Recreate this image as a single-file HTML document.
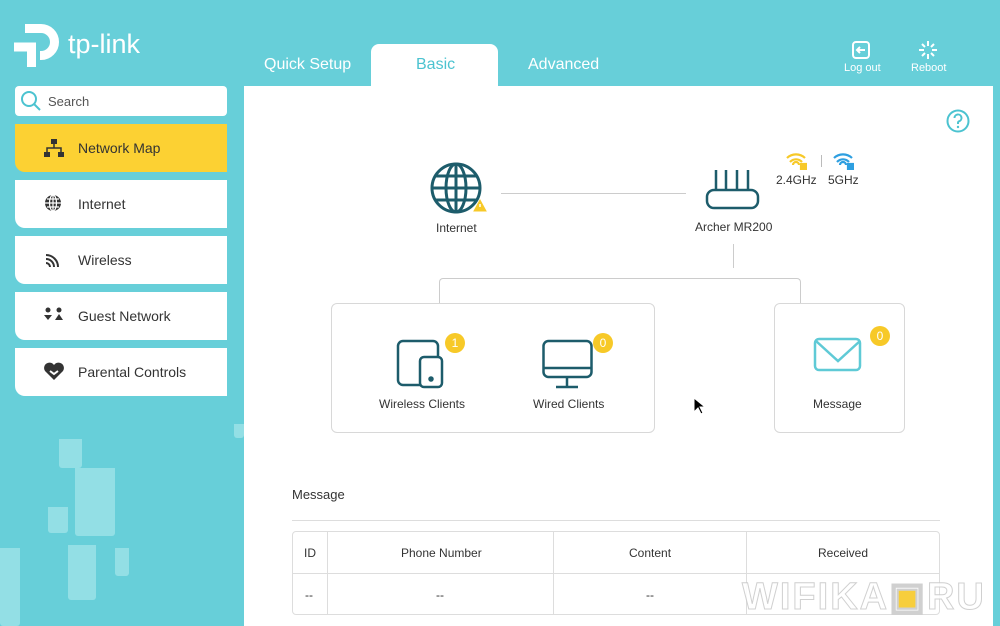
<!DOCTYPE html>
<html><head><meta charset="utf-8"><style>
*{margin:0;padding:0;box-sizing:border-box}
body{width:1000px;height:626px;overflow:hidden;background:#67cfd9;font-family:"Liberation Sans",sans-serif;position:relative;color:#333}
.abs{position:absolute}
.nav{position:absolute;left:15px;width:212px;height:48px;background:#fff;border-radius:0 0 0 10px;font-size:14px;color:#333}
.nav span{position:absolute;left:63px;top:16px}
.nav svg{position:absolute;left:28px;top:14px}
.tab{position:absolute;top:56px;font-size:16px;color:#fff}
.t{position:absolute;font-size:12px;color:#333;white-space:nowrap}
.badge{position:absolute;width:20px;height:20px;border-radius:50%;background:#f7c928;color:#fff;font-size:12px;text-align:center;line-height:20px}
.box{position:absolute;border:1px solid #d8d8d8;border-radius:6px;background:#fff}
.sq{position:absolute;background:#93dfe5;border-radius:0 0 3px 3px}
</style></head><body>
<div class="sq" style="left:59px;top:439px;width:23px;height:29px"></div>
<div class="sq" style="left:75px;top:468px;width:40px;height:68px"></div>
<div class="sq" style="left:48px;top:507px;width:20px;height:26px"></div>
<div class="sq" style="left:68px;top:545px;width:28px;height:55px"></div>
<div class="sq" style="left:0;top:548px;width:20px;height:78px"></div>
<div class="sq" style="left:115px;top:548px;width:14px;height:28px"></div>
<div class="sq" style="left:234px;top:424px;width:10px;height:14px"></div>
<svg class="abs" style="left:13px;top:18px" width="50" height="50" viewBox="0 0 50 50" fill="none" stroke="#fff" stroke-width="9"><path d="M12 10.5H28a13.5 13.5 0 0 1 0 27H27"/><path d="M1 29H23M18.5 27V49"/></svg>
<div class="abs" style="left:68px;top:29px;font-size:27px;color:#fff">tp-link</div>
<div class="tab" style="left:264px">Quick Setup</div>
<div class="abs" style="left:371px;top:44px;width:127px;height:46px;background:#fff;border-radius:8px 8px 0 0"></div>
<div class="tab" style="left:416px;color:#4cc3d0">Basic</div>
<div class="tab" style="left:528px">Advanced</div>
<svg class="abs" style="left:851px;top:40px" width="20" height="20" viewBox="0 0 20 20"><rect x="2" y="2" width="16" height="16" rx="3" fill="none" stroke="#fff" stroke-width="2"/><path d="M6 10h8M9 7l-3 3 3 3" stroke="#fff" stroke-width="2" fill="none"/></svg>
<div class="abs" style="left:844px;top:62px;font-size:11px;color:#fff">Log out</div>
<svg class="abs" style="left:917px;top:39px" width="22" height="22" viewBox="0 0 22 22" stroke="#fff" stroke-width="2"><path d="M11 2v5M11 15v5M2 11h5M15 11h5M5 5l3 3M14 14l3 3M17 5l-3 3M8 14l-3 3"/></svg>
<div class="abs" style="left:911px;top:62px;font-size:11px;color:#fff">Reboot</div>
<div class="abs" style="left:15px;top:86px;width:212px;height:30px;background:#fff;border-radius:4px"></div>
<svg class="abs" style="left:20px;top:90px" width="22" height="22" viewBox="0 0 22 22"><circle cx="9" cy="9" r="7" fill="none" stroke="#4cc3d0" stroke-width="2"/><path d="M14 14l6 6" stroke="#4cc3d0" stroke-width="2"/></svg>
<div class="abs" style="left:48px;top:94px;font-size:13px;color:#555">Search</div>
<div class="nav" style="top:124px;background:#fcd133"><svg width="22" height="20" viewBox="0 0 22 20" fill="#333"><rect x="8" y="1" width="6" height="5"/><rect x="1" y="14" width="6" height="5"/><rect x="15" y="14" width="6" height="5"/><path d="M11 6v4M4 14v-4h14v4" stroke="#333" stroke-width="1.5" fill="none"/></svg><span>Network Map</span></div>
<div class="nav" style="top:180px"><svg width="22" height="22" viewBox="0 0 22 22"><circle cx="10" cy="9" r="8" fill="#333"/><path d="M2 9h16M10 1v16M4 5h12M4 13h12" stroke="#fff" stroke-width="1.2"/><ellipse cx="10" cy="9" rx="3.5" ry="8" fill="none" stroke="#fff" stroke-width="1.2"/></svg><span>Internet</span></div>
<div class="nav" style="top:236px"><svg width="22" height="22" viewBox="0 0 22 22" fill="none" stroke="#333" stroke-width="2"><path d="M3 5a12 12 0 0 1 12 12M3 9a8 8 0 0 1 8 8M3 13a4 4 0 0 1 4 4"/></svg><span>Wireless</span></div>
<div class="nav" style="top:292px"><svg width="24" height="20" viewBox="0 0 24 20" fill="#333"><circle cx="5" cy="4" r="2.5"/><circle cx="16" cy="4" r="2.5"/><path d="M1 9h8l-4 5zM12 14l4-6 4 6z"/></svg><span>Guest Network</span></div>
<div class="nav" style="top:348px"><svg width="24" height="20" viewBox="0 0 24 20"><path d="M11 18L2 9a5 5 0 0 1 9-6a5 5 0 0 1 9 6z" fill="#333"/><path d="M7 9l4 3 4-3" stroke="#fff" stroke-width="2" fill="none"/></svg><span>Parental Controls</span></div>
<div class="abs" style="left:244px;top:86px;width:749px;height:540px;background:#fff"></div>
<svg class="abs" style="left:946px;top:109px" width="24" height="24" viewBox="0 0 24 24"><circle cx="12" cy="12" r="10.5" fill="none" stroke="#4cc3d0" stroke-width="2"/><path d="M8.5 9a3.5 3.5 0 1 1 4.5 3.3c-.8.3-1 .9-1 1.7v1" fill="none" stroke="#4cc3d0" stroke-width="2"/><circle cx="12" cy="18" r="1.2" fill="#4cc3d0"/></svg>
<svg class="abs" style="left:430px;top:162px" width="60" height="56" viewBox="0 0 60 56" fill="none" stroke="#1d5c6b" stroke-width="3"><circle cx="26" cy="26" r="24"/><ellipse cx="26" cy="26" rx="10" ry="24"/><path d="M26 2v48M2 26h48M6 14h40M6 38h40"/><path d="M50 38l-6 11h12z" fill="#f7c928" stroke="#f7c928" stroke-width="1"/><path d="M50 42v3" stroke="#fff" stroke-width="1.5"/></svg>
<div class="t" style="left:436px;top:221px">Internet</div>
<div class="abs" style="left:501px;top:193px;width:185px;height:1px;background:#ccc"></div>
<svg class="abs" style="left:705px;top:166px" width="56" height="46" viewBox="0 0 56 46" fill="none" stroke="#1d5c6b" stroke-width="2.5"><path d="M11 24V4M21 24V4M32 24V4M43 24V4"/><rect x="2" y="24" width="51" height="18" rx="7"/></svg>
<div class="t" style="left:695px;top:220px">Archer MR200</div>
<svg class="abs" style="left:785px;top:152px" width="22" height="18" viewBox="0 0 22 18" fill="none" stroke="#f7c928" stroke-width="2.2"><path d="M2 6a13 13 0 0 1 18 0M5 10a8 8 0 0 1 12 0M8 13a3 3 0 0 1 6 0"/><rect x="16" y="12" width="5" height="5" fill="#f7c928"/></svg>
<div class="abs" style="left:821px;top:155px;width:1px;height:12px;background:#bbb"></div>
<svg class="abs" style="left:832px;top:152px" width="22" height="18" viewBox="0 0 22 18" fill="none" stroke="#2e9fe0" stroke-width="2.2"><path d="M2 6a13 13 0 0 1 18 0M5 10a8 8 0 0 1 12 0M8 13a3 3 0 0 1 6 0"/><rect x="16" y="12" width="5" height="5" fill="#2e9fe0"/></svg>
<div class="t" style="left:776px;top:173px">2.4GHz</div>
<div class="t" style="left:828px;top:173px">5GHz</div>
<div class="abs" style="left:733px;top:244px;width:1px;height:24px;background:#ccc"></div>
<div class="abs" style="left:439px;top:278px;width:362px;height:25px;border:1px solid #ccc;border-bottom:none;border-radius:4px 4px 0 0"></div>
<div class="box" style="left:331px;top:303px;width:324px;height:130px"></div>
<div class="box" style="left:774px;top:303px;width:131px;height:130px"></div>
<svg class="abs" style="left:396px;top:339px" width="50" height="50" viewBox="0 0 50 50" fill="none" stroke="#1d5c6b" stroke-width="2.5"><rect x="2" y="2" width="40" height="44" rx="5"/><rect x="24" y="18" width="22" height="30" rx="4" fill="#fff"/><circle cx="35" cy="40" r="1.5" fill="#1d5c6b"/></svg>
<div class="badge" style="left:445px;top:333px">1</div>
<div class="t" style="left:379px;top:397px">Wireless Clients</div>
<svg class="abs" style="left:542px;top:339px" width="52" height="50" viewBox="0 0 52 50" fill="none" stroke="#1d5c6b" stroke-width="2.5"><rect x="1.5" y="2" width="48" height="36" rx="5"/><path d="M1.5 29h48M25 38v9M14 48h22"/></svg>
<div class="badge" style="left:593px;top:333px">0</div>
<div class="t" style="left:533px;top:397px">Wired Clients</div>
<svg class="abs" style="left:813px;top:337px" width="50" height="38" viewBox="0 0 50 38" fill="none" stroke="#5fcad6" stroke-width="2.5"><rect x="2" y="2" width="45" height="31" rx="4"/><path d="M3 4l22 20 22-20"/></svg>
<div class="badge" style="left:870px;top:326px">0</div>
<div class="t" style="left:813px;top:397px">Message</div>
<svg class="abs" style="left:693px;top:397px" width="12" height="18" viewBox="0 0 12 18"><path d="M1 1v14l4-4 3 6 2-1-3-6h5z" fill="#000" stroke="#fff"/></svg>
<div class="abs" style="left:292px;top:487px;font-size:13px;color:#333">Message</div>
<div class="abs" style="left:292px;top:520px;width:648px;height:1px;background:#ddd"></div>
<div class="abs" style="left:292px;top:531px;width:648px;height:84px;border:1px solid #ddd;border-radius:4px"></div>
<div class="abs" style="left:293px;top:573px;width:646px;height:1px;background:#ddd"></div>
<div class="abs" style="left:327px;top:532px;width:1px;height:82px;background:#ddd"></div>
<div class="abs" style="left:553px;top:532px;width:1px;height:82px;background:#ddd"></div>
<div class="abs" style="left:746px;top:532px;width:1px;height:82px;background:#ddd"></div>
<div class="t" style="left:304px;top:546px">ID</div>
<div class="t" style="left:401px;top:546px">Phone Number</div>
<div class="t" style="left:629px;top:546px">Content</div>
<div class="t" style="left:818px;top:546px">Received</div>
<div class="t" style="left:305px;top:588px">--</div>
<div class="t" style="left:436px;top:588px">--</div>
<div class="t" style="left:646px;top:588px">--</div>
<div class="abs" style="left:742px;top:574px;font-size:38px;color:#fff;font-weight:bold;letter-spacing:2px;-webkit-text-stroke:1px #ccc;opacity:.9">WIFIKA<span style="color:#f7c928">&#9635;</span>RU</div>
</body></html>
